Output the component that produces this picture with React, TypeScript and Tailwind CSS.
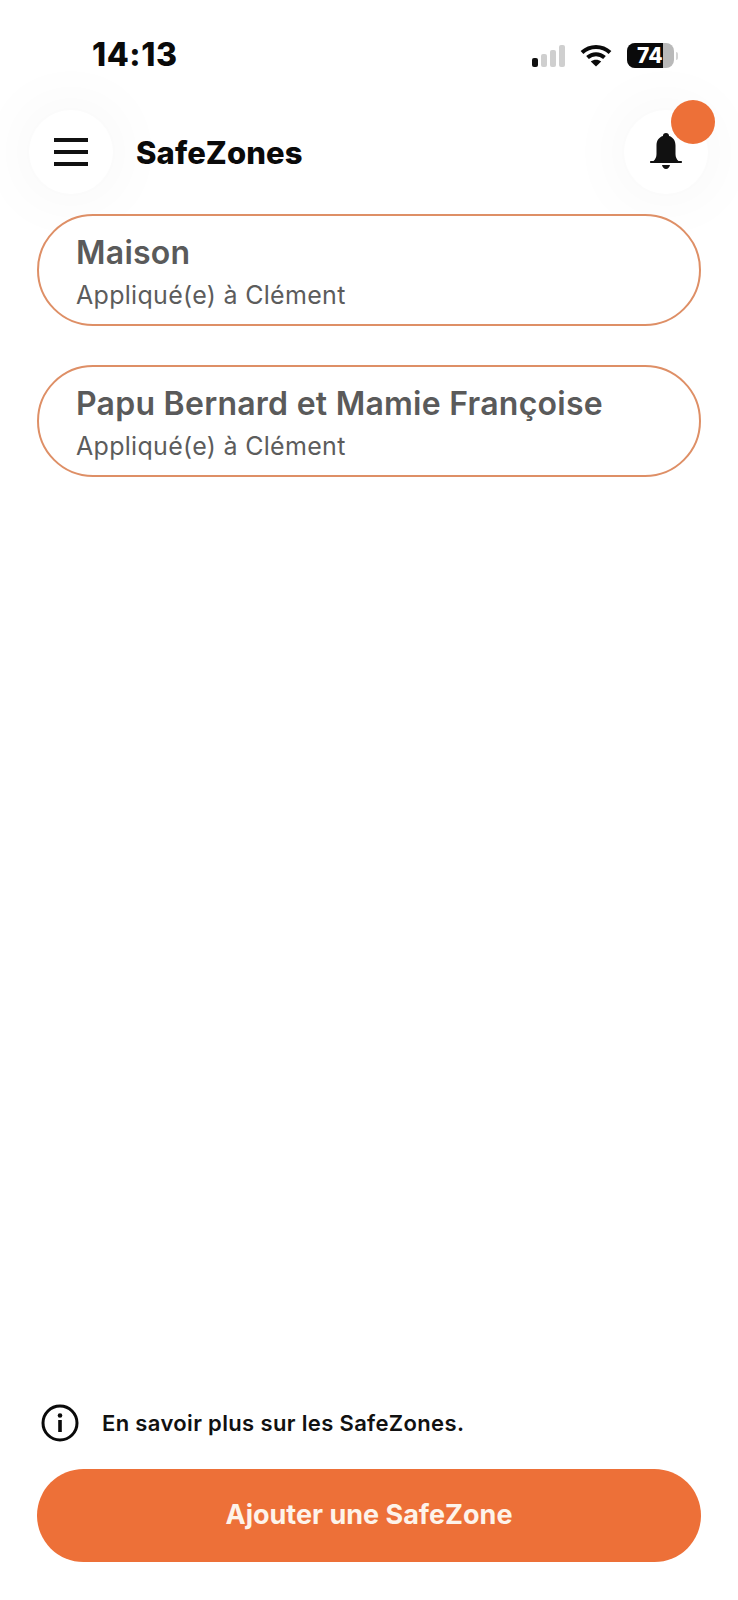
const zones = [
  { name: "Maison", target: "Appliqué(e) à Clément" },
  { name: "Papu Bernard et Mamie Françoise", target: "Appliqué(e) à Clément" },
]

function Cellular() {
  return (
    <div className="flex items-end gap-[3px]">
      <div className="h-[9px] w-[6px] rounded-[2px] bg-[#111]" />
      <div className="h-[13px] w-[6px] rounded-[2px] bg-[#cfcfcf]" />
      <div className="h-[17px] w-[6px] rounded-[2px] bg-[#cfcfcf]" />
      <div className="h-[22px] w-[6px] rounded-[2px] bg-[#cfcfcf]" />
    </div>
  )
}

function Wifi() {
  return (
    <svg width="32" height="23" viewBox="0 0 32 23" fill="none">
      <path d="M2 8.5C10 1 22 1 30 8.5" stroke="#0a0a0a" strokeWidth="4" />
      <path d="M7.5 13.5C12.5 9 19.5 9 24.5 13.5" stroke="#0a0a0a" strokeWidth="4" />
      <path d="M16 22.5L10.8 17.6C13.8 15.1 18.2 15.1 21.2 17.6Z" fill="#0a0a0a" />
    </svg>
  )
}

function Battery() {
  return (
    <div className="flex items-center gap-[2px]">
      <div className="relative flex h-[25px] w-[47px] items-center overflow-hidden rounded-[8px] bg-[#b9b9b9]">
        <div className="absolute inset-y-0 left-0 w-[36px] bg-[#0a0a0a]" />
        <span className="relative ml-[10px] text-[21px] leading-none font-extrabold text-white">74</span>
      </div>
      <div className="h-[8px] w-[2px] rounded-r-full bg-[#d4d4d4]" />
    </div>
  )
}

function Bell() {
  return (
    <svg width="32" height="38" viewBox="0 0 32 38" fill="#111">
      <path d="M16 0c-1.900 0-3 1.300-3.100 3C8.600 4.300 6.500 8 6.500 12.500V21c0 3-1.200 5.500-3 7H1c-.8 0-1 .5-1 1s.2 1 1 1h30c.8 0 1-.5 1-1s-.2-1-1-1h-2.500c-1.800-1.500-3-4-3-7v-8.500C25.500 8 23.400 4.300 19.100 3 19 1.300 17.900 0 16 0z" />
      <path d="M12 32h8c-.4 2.300-2 4-4 4s-3.600-1.700-4-4z" />
    </svg>
  )
}

function InfoIcon() {
  return (
    <svg width="38" height="38" viewBox="0 0 38 38" fill="none">
      <circle cx="19" cy="19" r="17" stroke="#0a0a0a" strokeWidth="3" />
      <circle cx="19" cy="11.500" r="2.300" fill="#0a0a0a" />
      <rect x="17.200" y="16" width="3.600" height="12" fill="#0a0a0a" />
    </svg>
  )
}

export default function App() {
  return (
    <div className="flex h-[1600px] w-[738px] flex-col overflow-hidden bg-white font-['Inter',sans-serif]">
      {/* Status bar */}
      <div className="flex h-[110px] shrink-0 items-start justify-between pt-[38px] pr-[60px] pl-[92px]">
        <span className="text-[32px] leading-[34px] font-extrabold tracking-[0.6px] text-[#0a0a0a]">14:13</span>
        <div className="mt-[5px] flex items-center gap-[15px]">
          <Cellular />
          <Wifi />
          <Battery />
        </div>
      </div>

      {/* Header */}
      <div className="flex h-[84px] shrink-0 items-center justify-between pr-[30px] pl-[29px]">
        <div className="flex items-center gap-[23px]">
          <div className="flex size-[84px] items-center justify-center rounded-full bg-white shadow-[0_0_70px_rgba(0,0,0,0.05)]">
            <div className="flex w-[34px] flex-col gap-[8px]">
              <div className="h-[4px] bg-[#111]" />
              <div className="h-[4px] bg-[#111]" />
              <div className="h-[4px] bg-[#111]" />
            </div>
          </div>
          <h1 className="text-[31px] leading-none font-extrabold tracking-[0.1px] text-[#0a0a0a]">SafeZones</h1>
        </div>
        <div className="relative flex size-[84px] items-center justify-center rounded-full bg-white shadow-[0_0_70px_rgba(0,0,0,0.05)]">
          <Bell />
          <div className="absolute -top-[10px] -right-[7px] size-[44px] rounded-full bg-[#ed7038]" />
        </div>
      </div>

      {/* Zones */}
      <div className="mt-[20px] flex flex-col gap-[39px] px-[37px]">
        {zones.map((zone) => (
          <div
            key={zone.name}
            className="relative flex h-[112px] flex-col justify-center rounded-full border-2 border-[#de8f66] bg-white pt-[4px] pl-[37px]"
          >
            <div className="text-[32px] leading-[38px] font-semibold tracking-[0.25px] text-[#5a5a5a]">{zone.name}</div>
            <div className="mt-[8px] text-[25px] leading-[30px] tracking-[0.3px] text-[#5c5c5c]">{zone.target}</div>
          </div>
        ))}
      </div>

      {/* Footer */}
      <div className="mt-auto flex flex-col px-[37px] pb-[38px]">
        <div className="flex items-center gap-[23px] pl-[4px]">
          <InfoIcon />
          <span className="text-[22px] leading-none font-semibold tracking-[0.35px] text-[#111]">En savoir plus sur les SafeZones.</span>
        </div>
        <button className="mt-[27px] h-[93px] rounded-full bg-[#ed7038] text-[27px] font-bold text-[#fdf3ea]">
          Ajouter une SafeZone
        </button>
      </div>
    </div>
  )
}
